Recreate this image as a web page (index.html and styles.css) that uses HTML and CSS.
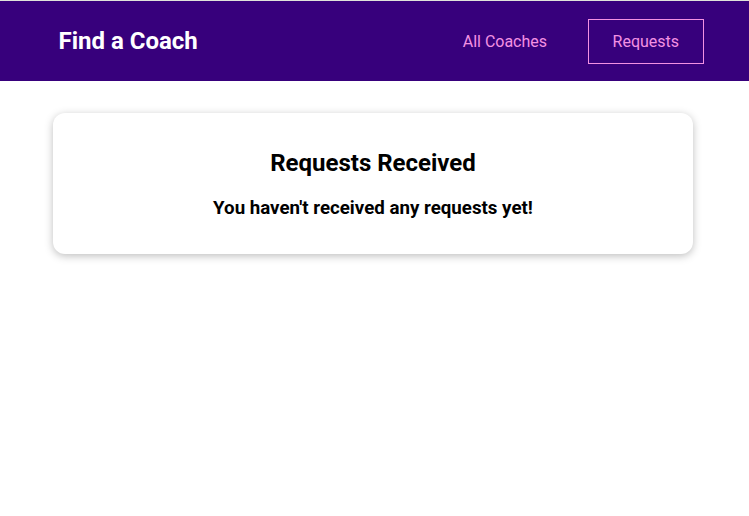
FILE: index.html
```html
<!DOCTYPE html>
<html lang="en">
<head>
<meta charset="utf-8">
<title>Find a Coach</title>
<link rel="stylesheet" href="styles.css">
</head>
<body>
<header class="site-header">
  <nav class="nav">
    <h1 class="brand"><a href="#" class="brand-link">Find a Coach</a></h1>
    <ul class="nav-list">
      <li class="nav-item"><a href="#" class="nav-link">All Coaches</a></li>
      <li class="nav-item"><a href="#" class="nav-link active">Requests</a></li>
    </ul>
  </nav>
</header>
<main class="content">
  <section class="card">
    <header>
      <h2 class="card-title">Requests Received</h2>
    </header>
    <h3 class="card-empty">You haven't received any requests yet!</h3>
  </section>
</main>
</body>
</html>
```
FILE: styles.css
```css
* { box-sizing: border-box; }
html, body {
  margin: 0;
  padding: 0;
}
body {
  font-family: Roboto, "Liberation Sans", sans-serif;
  background: #ffffff;
  border-top: 1px solid #dfe2da;
}
.site-header {
  width: 100%;
  height: 80px;
  background-color: #37007c;
  display: flex;
  align-items: center;
}
.nav {
  width: 90%;
  margin: 0 auto;
  display: flex;
  justify-content: space-between;
  align-items: center;
}
.brand {
  margin: 0;
  font-size: 24px;
}
.brand-link {
  color: #ffffff;
  text-decoration: none;
  display: inline-block;
  padding: 12px 20px;
  border: 1px solid transparent;
}
.nav-list {
  list-style: none;
  margin: 0;
  padding: 0;
  display: flex;
  align-items: center;
}
.nav-item {
  margin: 0 8px;
}
.nav-link {
  text-decoration: none;
  color: #f391e3;
  display: inline-block;
  padding: 12px 24px;
  border: 1px solid transparent;
  font-size: 16px;
}
.nav-link.active {
  padding: 12px 23.5px;
  border-color: #f391e3;
}
.content {
  padding: 0 3px 0 0;
  overflow: hidden;
}
.card {
  max-width: 640px;
  margin: 32px auto;
  padding: 16px;
  border-radius: 12px;
  box-shadow: 0 2px 8px rgba(0, 0, 0, 0.26);
  text-align: center;
}
.card-title {
  font-size: 24px;
  margin: 20px 0;
}
.card-empty {
  font-size: 18.72px;
  margin: 18.72px 0;
}
```
